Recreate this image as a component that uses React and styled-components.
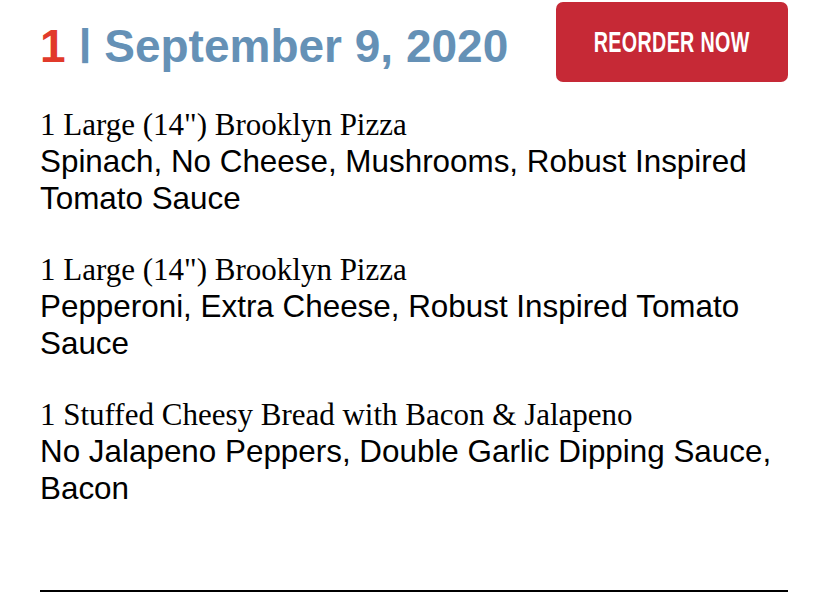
import React from "react";
import styled, { createGlobalStyle } from "styled-components";

const GlobalStyle = createGlobalStyle`
  body {
    margin: 0;
    background: #fff;
  }
`;

const Page = styled.div`
  padding: 2px 40px 0;
  width: 828px;
  box-sizing: border-box;
`;

const Header = styled.div`
  display: flex;
  align-items: center;
  justify-content: space-between;
  height: 80px;
`;

const Title = styled.h2`
  margin: 0;
  padding-top: 8px;
  font-family: "Liberation Sans", Arial, sans-serif;
  font-weight: 700;
  font-size: 46px;
  color: #6591b6;
  white-space: nowrap;
`;

const Count = styled.span`
  color: #e13a2b;
`;

const Separator = styled.span`
  font-size: 36px;
  vertical-align: 7px;
  display: inline-block;
  margin: 0 1px 0 2px;
  transform: scaleX(1.3);
`;

const ReorderButton = styled.button`
  width: 232px;
  height: 80px;
  border: none;
  border-radius: 7px;
  background: #c62936;
  color: #fff;
  display: flex;
  align-items: center;
  justify-content: center;
  padding: 0;

  span {
    display: inline-block;
    font-family: "Liberation Sans", Arial, sans-serif;
    font-weight: 700;
    font-size: 29px;
    letter-spacing: 0.5px;
    transform: scaleX(0.68);
    white-space: nowrap;
  }
`;

const ItemList = styled.div`
  display: flex;
  flex-direction: column;
  gap: 34px;
  margin-top: 24px;
`;

const Item = styled.div`
  line-height: 37px;
`;

const ItemName = styled.div`
  font-family: "Liberation Serif", "Times New Roman", serif;
  font-size: 31px;
  color: #000;
`;

const ItemOptions = styled.div`
  font-family: "Liberation Sans", Arial, sans-serif;
  font-size: 31.4px;
  color: #000;
`;

const Divider = styled.hr`
  margin: 83px 0 0;
  border: none;
  height: 2px;
  background: #000;
`;

const items = [
  {
    name: `1 Large (14") Brooklyn Pizza`,
    options: "Spinach, No Cheese, Mushrooms, Robust Inspired Tomato Sauce",
  },
  {
    name: `1 Large (14") Brooklyn Pizza`,
    options: "Pepperoni, Extra Cheese, Robust Inspired Tomato Sauce",
  },
  {
    name: "1 Stuffed Cheesy Bread with Bacon & Jalapeno",
    options: "No Jalapeno Peppers, Double Garlic Dipping Sauce, Bacon",
  },
];

export default function App() {
  return (
    <>
      <GlobalStyle />
      <Page>
        <Header>
          <Title>
            <Count>1</Count> <Separator>|</Separator> September 9, 2020
          </Title>
          <ReorderButton>
            <span>REORDER NOW</span>
          </ReorderButton>
        </Header>
        <ItemList>
          {items.map((item, i) => (
            <Item key={i}>
              <ItemName>{item.name}</ItemName>
              <ItemOptions>{item.options}</ItemOptions>
            </Item>
          ))}
        </ItemList>
        <Divider />
      </Page>
    </>
  );
}
